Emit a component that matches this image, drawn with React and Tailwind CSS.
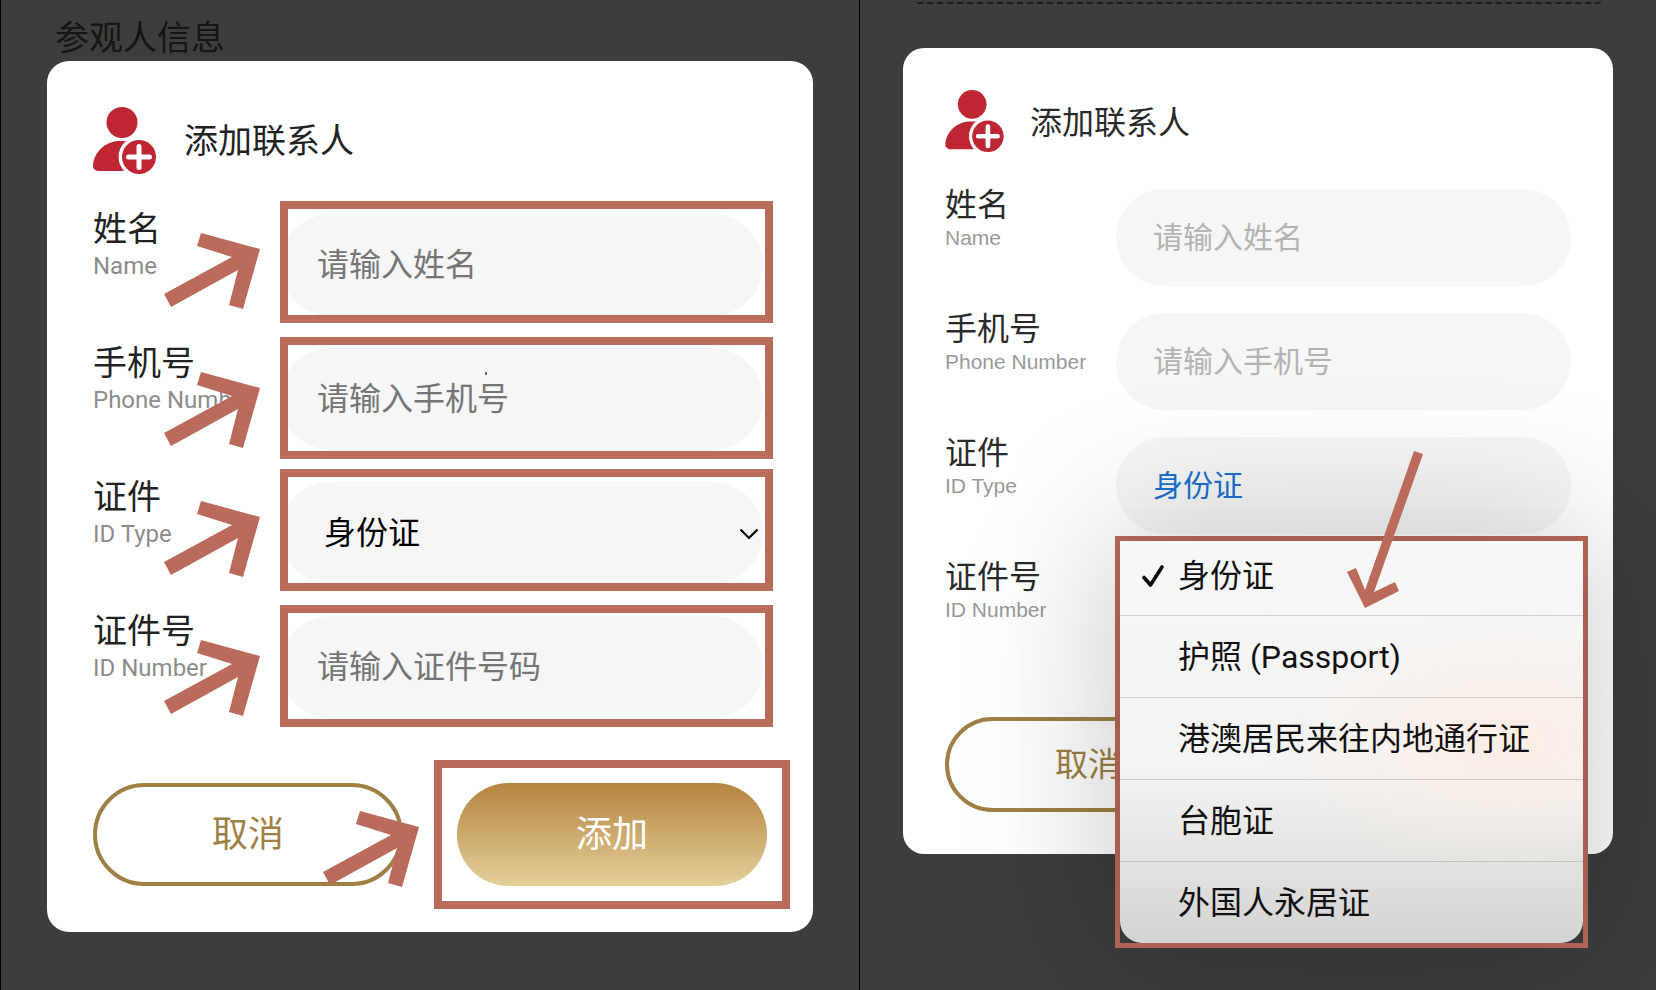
import React from "react";

const ID_TYPES = [
  "身份证",
  "护照 (Passport)",
  "港澳居民来往内地通行证",
  "台胞证",
  "外国人永居证",
];

const FIELDS = [
  { key: "name", label: "姓名", en: "Name", placeholder: "请输入姓名" },
  { key: "phone", label: "手机号", en: "Phone Number", placeholder: "请输入手机号" },
  { key: "idType", label: "证件", en: "ID Type", options: ID_TYPES },
  { key: "idNumber", label: "证件号", en: "ID Number", placeholder: "请输入证件号码" },
];

// android / ios flavours of the same dialog
const ANDROID = {
  card: "mx-[46px] rounded-[22px] bg-white p-[46px]",
  icon: "h-[67px] w-[63px]",
  header: "flex items-center gap-7",
  title: "text-[34px] leading-[40px] text-[#222]",
  rows: "mt-9 flex flex-col gap-7",
  row: "relative flex h-[106px] items-start",
  labels: "flex w-[187px] shrink-0 flex-col whitespace-nowrap",
  label: "text-[34px] leading-[38px] text-[#222]",
  en: "text-[24px] leading-[36px] text-[#8c8c8c]",
  field: "relative mt-1 mr-1 h-[102px] flex-1",
  input:
    "h-full w-full rounded-full bg-[#f6f6f6] pl-[37px] text-[32px] outline-none placeholder:text-[#757575]",
  select:
    "h-full w-full appearance-none rounded-full bg-[#f6f6f6] pl-[44px] text-[32px] text-black outline-none",
};

const IOS = {
  card: "mx-[43px] rounded-[21px] bg-white p-[42px]",
  icon: "h-[62px] w-[59px]",
  header: "flex items-center gap-[26px]",
  title: "pt-1 text-[32px] leading-[40px] text-[#2a2a2a]",
  rows: "mt-[35px] flex flex-col gap-6",
  row: "relative flex h-[100px] items-start",
  labels: "flex w-[171px] shrink-0 flex-col whitespace-nowrap",
  label: "text-[32px] leading-[36px] text-[#2a2a2a]",
  en: "text-[21px] leading-[30px] text-[#999]",
  field: "relative mt-[2px] h-[97px] flex-1",
  input:
    "h-full w-full rounded-full bg-[#f6f6f6] pl-[37px] text-[30px] outline-none placeholder:text-[#b3b3b3]",
  select:
    "h-full w-full appearance-none rounded-full bg-[#f6f6f6] pl-[37px] text-[30px] text-[#1a6fd0] outline-none",
};

const AddUserIcon = ({ className }) => (
  <svg viewBox="0 0 63 67" className={className} aria-hidden="true">
    <circle cx="29" cy="15.5" r="15.5" fill="#be2633" />
    <path
      d="M31 34H25C12 35 1 45 0 58C0 62 2 64 7 64H40V34Z"
      fill="#be2633"
    />
    <circle cx="46" cy="50" r="20.5" fill="#fff" />
    <circle cx="46" cy="50" r="17" fill="#be2633" />
    <path
      d="M46 39.5V60.5M35.5 50H56.5"
      stroke="#fff"
      strokeWidth="5"
      strokeLinecap="round"
    />
  </svg>
);

const Pointer = ({ className }) => (
  <svg
    viewBox="0 0 96 76"
    className={`pointer-events-none absolute h-[76px] w-[96px] ${className}`}
    aria-hidden="true"
  >
    <polygon
      points="37,0 96,16 79,76 65,72 74,37 7,74 0,61 68,24 33,13"
      fill="#bb6b5b"
    />
  </svg>
);

const LongPointer = () => (
  <svg
    viewBox="0 0 76 157"
    className="pointer-events-none absolute -top-[90px] left-[227px] h-[157px] w-[76px]"
    aria-hidden="true"
  >
    <polygon
      points="67,0 76,3 27,141 48,131 52,140 18,157 0,121 9,117 18,139"
      fill="#bb6b5b"
    />
  </svg>
);

const Highlight = ({ className }) => (
  <div
    className={`pointer-events-none absolute border-8 border-[#bb6b5b] ${className}`}
  />
);

const Field = ({ id, field, theme, children }) => (
  <div className={theme.field}>
    {field.options ? (
      <select id={id} className={theme.select} defaultValue={field.options[0]}>
        {field.options.map((option) => (
          <option key={option} value={option}>
            {option}
          </option>
        ))}
      </select>
    ) : (
      <input
        id={id}
        type="text"
        className={theme.input}
        placeholder={field.placeholder}
      />
    )}
    {children}
  </div>
);

const Labels = ({ id, field, theme }) => (
  <label htmlFor={id} className={theme.labels}>
    <span className={theme.label}>{field.label}</span>
    <span className={theme.en}>{field.en}</span>
  </label>
);

const Header = ({ theme }) => (
  <header className={theme.header}>
    <AddUserIcon className={theme.icon} />
    <h2 className={theme.title}>添加联系人</h2>
  </header>
);

const IdTypeMenu = () => (
  <div className="absolute top-full -right-[17px] -left-px z-10 mt-[2px] border-5 border-[#bb6b5b]">
    <ul
      role="listbox"
      aria-label="证件"
      className="rounded-b-[22px] bg-[radial-gradient(ellipse_at_85%_50%,#fbeee5_0%,#fbeee500_45%),linear-gradient(#f7f7f7,#f4f4f4_55%,#e4e4e2_78%,#d3d3d3)] font-['Roboto','Noto_Sans_CJK_SC',sans-serif] shadow-[0_0_150px_10px_rgba(0,0,0,0.22)]"
    >
      {ID_TYPES.map((type, i) => (
        <li
          key={type}
          role="option"
          aria-selected={i === 0}
          className={
            i === 0
              ? "flex h-[74px] items-center pb-1"
              : "flex h-[82px] items-center border-t border-black/15"
          }
        >
          <span className="flex w-[58px] justify-center pl-2">
            {i === 0 && (
              <svg
                viewBox="0 0 24 22"
                className="h-[22px] w-6"
                fill="none"
                stroke="#0a0a0a"
                strokeWidth="3.6"
                strokeLinecap="round"
                strokeLinejoin="round"
                aria-hidden="true"
              >
                <path d="M3 12.5L9.5 20L21 2" />
              </svg>
            )}
          </span>
          <button type="button" className="text-[32px] leading-[40px] text-[#111]">
            {type}
          </button>
        </li>
      ))}
    </ul>
    <LongPointer />
  </div>
);

const AndroidDialog = () => (
  <div className={ANDROID.card}>
    <Header theme={ANDROID} />
    <form>
      <div className={ANDROID.rows}>
        {FIELDS.map((field, i) => {
          const id = `android-${field.key}`;
          return (
            <div key={field.key} className={ANDROID.row}>
              <Labels id={id} field={field} theme={ANDROID} />
              <Field id={id} field={field} theme={ANDROID}>
                {field.options && (
                  <svg
                    viewBox="0 0 20 12"
                    className="pointer-events-none absolute top-[46px] right-1 h-3 w-5"
                    fill="none"
                    stroke="#000"
                    strokeWidth="2.2"
                    aria-hidden="true"
                  >
                    <path d="M1.5 1.5L10 10L18.5 1.5" />
                  </svg>
                )}
                {field.key === "phone" && (
                  <span className="absolute top-6 left-[205px] h-[3px] w-[2px] bg-[#666]" />
                )}
                <Highlight
                  className={
                    i % 2
                      ? "-top-[11px] -right-[10px] left-0 h-[122px]"
                      : "-top-[13px] -right-[10px] left-0 h-[122px]"
                  }
                />
              </Field>
              <Pointer className={i % 2 ? "top-7 left-[71px]" : "top-[23px] left-[71px]"} />
            </div>
          );
        })}
      </div>
      <div className="mt-[65px] grid grid-cols-2 gap-[54px]">
        <div className="relative">
          <button
            type="button"
            className="h-[103px] w-full rounded-full border-4 border-[#a07f45] text-[36px] text-[#a07f45]"
          >
            取消
          </button>
          <Pointer className="top-7 -right-4" />
        </div>
        <div className="relative">
          <button
            type="button"
            className="h-[103px] w-full rounded-full bg-linear-to-b from-[#b4843f] to-[#e4d09a] text-[36px] text-white"
          >
            添加
          </button>
          <Highlight className="-inset-[23px]" />
        </div>
      </div>
    </form>
  </div>
);

const IosDialog = () => (
  <div className={IOS.card}>
    <Header theme={IOS} />
    <form>
      <div className={IOS.rows}>
        {FIELDS.map((field) => {
          const id = `ios-${field.key}`;
          return (
            <div key={field.key} className={IOS.row}>
              <Labels id={id} field={field} theme={IOS} />
              <Field id={id} field={field} theme={IOS}>
                {field.options && <IdTypeMenu />}
              </Field>
            </div>
          );
        })}
      </div>
      <div className="mt-[58px] grid grid-cols-2 gap-[54px]">
        <button
          type="button"
          className="h-[95px] rounded-full border-4 border-[#a07f45] text-[33px] text-[#a07f45]"
        >
          取消
        </button>
      </div>
    </form>
  </div>
);

const App = () => {
  return (
    <main className="flex min-h-screen bg-[#3d3d3d]">
      <section className="flex-[859] border-x border-black pt-[15px] font-['Roboto','Noto_Sans_CJK_SC',sans-serif]">
        <h1 className="pl-[54px] text-[34px] leading-[46px] text-[#151515]">
          参观人信息
        </h1>
        <AndroidDialog />
      </section>
      <section className="relative flex-[797] pt-12 font-['Liberation_Sans','Noto_Sans_CJK_SC',sans-serif]">
        <div className="absolute top-0 right-[55px] left-[54px] h-1 rounded-b-md border-b-2 border-dashed border-[#1d1d14]" />
        <IosDialog />
      </section>
    </main>
  );
};

export default App;
